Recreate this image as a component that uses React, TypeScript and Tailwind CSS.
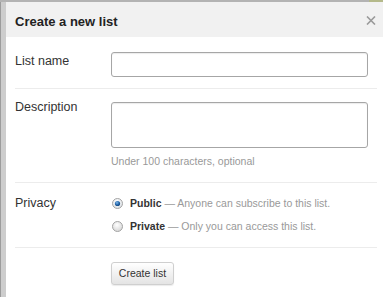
import React from "react"

const font = "font-['Liberation_Sans',Arial,sans-serif]"

function CloseIcon() {
  return (
    <svg width="10" height="9" viewBox="0 0 10 9" className="block">
      <path d="M1 0.5 L9 8.5 M9 0.5 L1 8.5" stroke="#9a9a9a" strokeWidth="1.6" />
    </svg>
  )
}

function Radio({ checked }: { checked?: boolean }) {
  return (
    <svg width="11" height="11" viewBox="0 0 11 11" className="block shrink-0">
      <defs>
        <radialGradient id={checked ? "rc" : "ru"} cx="0.45" cy="0.35" r="0.7">
          <stop offset="0" stopColor="#ffffff" />
          <stop offset="1" stopColor={checked ? "#d8dde2" : "#d2d2d2"} />
        </radialGradient>
        <radialGradient id="dot" cx="0.4" cy="0.35" r="0.7">
          <stop offset="0" stopColor="#7fb6e8" />
          <stop offset="0.6" stopColor="#1f63a8" />
          <stop offset="1" stopColor="#123f73" />
        </radialGradient>
      </defs>
      <circle cx="5.5" cy="5.5" r="5" fill={`url(#${checked ? "rc" : "ru"})`} stroke="#a4a4a4" strokeWidth="1" />
      {checked && <circle cx="5.5" cy="5.5" r="2.6" fill="url(#dot)" />}
    </svg>
  )
}

function Separator() {
  return <div className="h-px bg-[#ececec]" />
}

export default function App() {
  return (
    <div className={`${font} w-[383px] h-[297px] overflow-hidden bg-white flex flex-col`}>
      {/* top edge of the window */}
      <div className="flex h-[2px] shrink-0">
        <div className="flex-1 bg-[#b3b3b3]" />
        <div className="w-[14px] bg-[#b4b98a]" />
      </div>
      <div className="flex flex-1 min-h-0">
        <div className="w-px bg-[#9c9c9c]" />
        <div className="w-[5px] bg-[#cdcdcd]" />
        <div className="flex-1 flex flex-col">
          <div className="h-[35px] bg-[#f1f1f1] flex items-start pl-[9px] pr-[7px]">
            <h1 className="mt-[12px] text-[13px] leading-[16px] font-bold text-[#222]">Create a new list</h1>
            <div className="ml-auto mt-[14px]">
              <CloseIcon />
            </div>
          </div>

          <div className="pl-[9px] pr-[6px] text-[#333]">
            {/* List name */}
            <div className="flex items-start pt-[15px] pb-[11px]">
              <div className="w-[96px] text-[12.5px] leading-[16px] mt-px">List name</div>
              <div className="w-[257px] h-[25px] border border-[#a6a6a6] rounded-[3px] shadow-[inset_0_1px_1px_rgba(0,0,0,0.08)]" />
            </div>
            <Separator />

            {/* Description */}
            <div className="flex items-start pt-[13px] pb-[14px]">
              <div className="w-[96px] text-[12.5px] leading-[16px] -mt-[3px]">Description</div>
              <div className="flex flex-col">
                <div className="w-[257px] h-[46px] border border-[#a6a6a6] rounded-[3px] shadow-[inset_0_1px_1px_rgba(0,0,0,0.08)]" />
                <div className="mt-[7px] text-[10.5px] leading-[13px] text-[#999]">Under 100 characters, optional</div>
              </div>
            </div>
            <Separator />

            {/* Privacy */}
            <div className="flex items-start pt-[12px] pb-[14px]">
              <div className="w-[96px] text-[12.5px] leading-[16px]">Privacy</div>
              <div className="flex flex-col gap-[10px] mt-[2px] text-[10.5px] leading-[13px]">
                <div className="flex items-center h-[13px]">
                  <div className="ml-px mr-[7px]">
                    <Radio checked />
                  </div>
                  <span className="font-bold text-[#333]">Public</span>
                  <span className="text-[#999]">&nbsp;— Anyone can subscribe to this list.</span>
                </div>
                <div className="flex items-center h-[13px]">
                  <div className="ml-px mr-[7px]">
                    <Radio />
                  </div>
                  <span className="font-bold text-[#333]">Private</span>
                  <span className="text-[#999]">&nbsp;— Only you can access this list.</span>
                </div>
              </div>
            </div>
            <Separator />

            {/* Submit */}
            <div className="flex pt-[14px] pl-[96px]">
              <button className="w-[63px] h-[23px] rounded-[3px] border border-[#cfcfcf] bg-gradient-to-b from-[#ffffff] to-[#e4e4e4] text-[10.5px] leading-[13px] text-[#333] shadow-[0_1px_1px_rgba(0,0,0,0.08)]">
                Create list
              </button>
            </div>
          </div>
        </div>
      </div>
    </div>
  )
}
